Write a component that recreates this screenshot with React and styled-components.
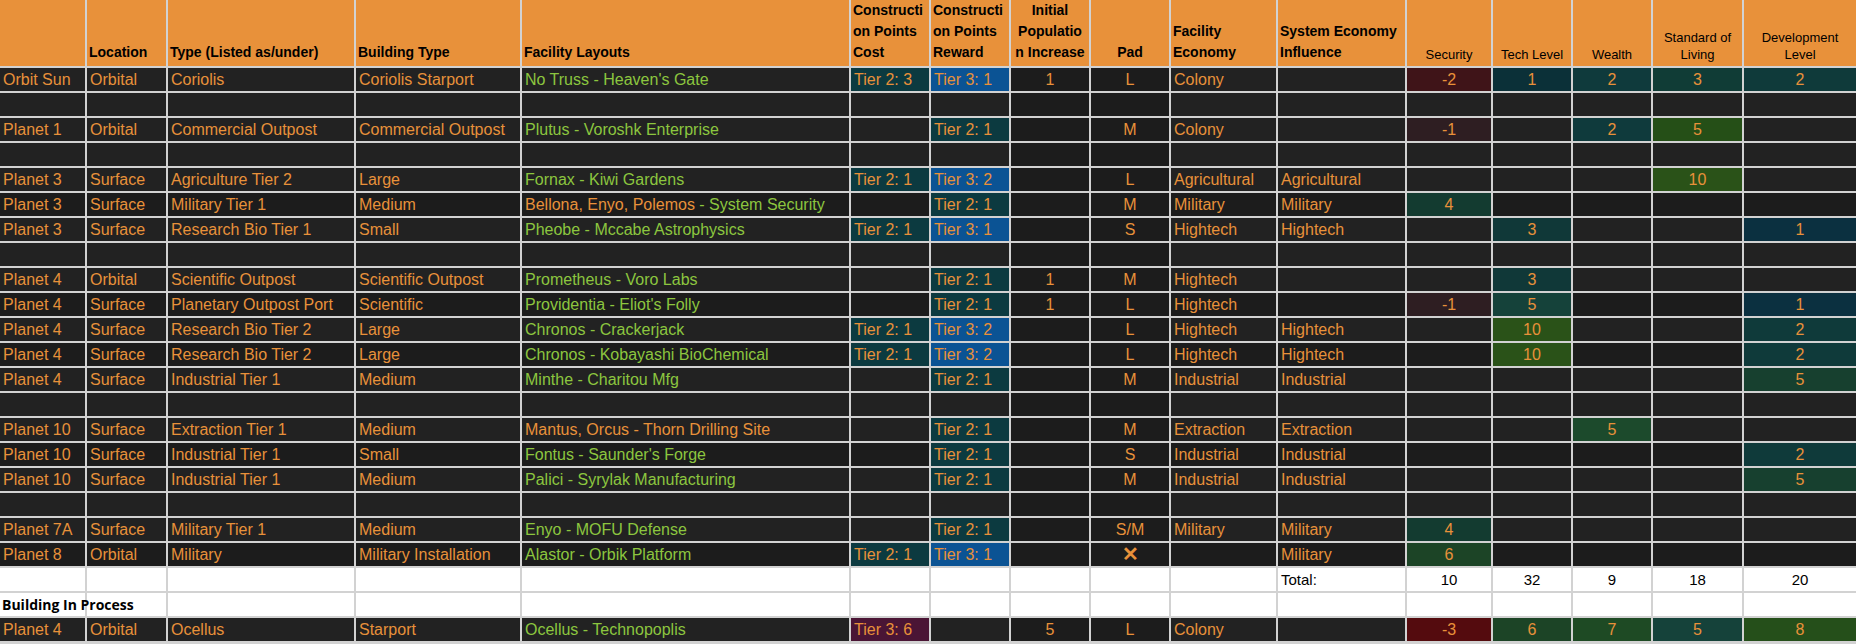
import React from "react";
import styled, { createGlobalStyle } from "styled-components";

const Global = createGlobalStyle`
  html, body { margin: 0; padding: 0; background: #fff; }
  body { font-family: "Liberation Sans", Arial, sans-serif; }
`;

const COLS = "85px 79px 186px 164px 327px 78px 78px 78px 78px 105px 127px 84px 78px 78px 89px 112px";

const Sheet = styled.div`
  display: grid;
  grid-template-columns: ${COLS};
  grid-auto-rows: 23px;
  grid-template-rows: 66px;
  gap: 2px;
  background: #d2d2d2;
  width: 1856px;
  height: 644px;
  overflow: hidden;
`;

const Head = styled.div`
  background: #e8913a;
  color: #000;
  font-weight: ${(p) => (p.$small ? 400 : 700)};
  font-size: ${(p) => (p.$small ? "13px" : "14px")};
  line-height: ${(p) => (p.$small ? "17px" : "21px")};
  display: flex;
  flex-direction: column;
  justify-content: flex-end;
  align-items: ${(p) => (p.$center ? "center" : "flex-start")};
  text-align: ${(p) => (p.$center ? "center" : "left")};
  padding: 0 2px 3px;
  overflow: hidden;
  white-space: pre-line;
`;

const Cell = styled.div`
  background: ${(p) => p.$bg || "#222"};
  color: ${(p) => (p.$green ? "#8cc63f" : "#e8913a")};
  font-size: 16px;
  line-height: 23px;
  padding: 0 3px;
  white-space: nowrap;
  overflow: hidden;
  text-align: ${(p) => (p.$center ? "center" : "left")};
`;

const WhiteCell = styled.div`
  background: #fff;
  color: #000;
  font-size: 15px;
  line-height: 23px;
  padding: 0 3px;
  white-space: nowrap;
  text-align: ${(p) => (p.$center ? "center" : "left")};
  overflow: visible;
  position: relative;
  z-index: ${(p) => (p.$top ? 1 : 0)};
`;

const Section = styled.span`
  font-family: "Open Sans", "Noto Sans", sans-serif;
  font-weight: 700;
  font-size: 14px;
  position: absolute;
  left: 2px;
  top: 0;
`;

const Orange = styled.span`color: #e8913a;`;
const Cross = styled.span`font-size: 20px; font-weight: 700;`;

const T = { teal: "#0c3a40", blue: "#0b5394", purple: "#4a1535" };

const heads = [
  ["", 0, 0], ["Location", 0, 0], ["Type (Listed as/under)", 0, 0], ["Building Type", 0, 0],
  ["Facility Layouts", 0, 0], ["Constructi\non Points\nCost", 0, 0], ["Constructi\non Points\nReward", 0, 0],
  ["Initial\nPopulatio\nn Increase", 1, 0], ["Pad", 1, 0], ["Facility\nEconomy", 0, 0],
  ["System Economy\nInfluence", 0, 0], ["Security", 1, 1], ["Tech Level", 1, 1], ["Wealth", 1, 1],
  ["Standard of\nLiving", 1, 1], ["Development\nLevel", 1, 1],
];

const R = (...a) => a;
const rows = [
  R("Orbit Sun","Orbital","Coriolis","Coriolis Starport","No Truss - Heaven's Gate",["Tier 2: 3",T.teal],["Tier 3: 1",T.blue],"1","L","Colony","",["-2","#3f1418"],["1","#0b3038"],["2","#0f3a3c"],["3","#103c36"],["2","#0f3a3a"]),
  null,
  R("Planet 1","Orbital","Commercial Outpost","Commercial Outpost","Plutus - Voroshk Enterprise","",["Tier 2: 1",T.teal],"","M","Colony","",["-1","#2e1e22"],"",["2","#0f3a3c"],["5","#254f17"],""),
  null,
  R("Planet 3","Surface","Agriculture Tier 2","Large","Fornax - Kiwi Gardens",["Tier 2: 1",T.teal],["Tier 3: 2",T.blue],"","L","Agricultural","Agricultural","","","",["10","#2a5218"],""),
  R("Planet 3","Surface","Military Tier 1","Medium",["Bellona, Enyo, Polemos"," - System Security"],"",["Tier 2: 1",T.teal],"","M","Military","Military",["4","#133b30"],"","","",""),
  R("Planet 3","Surface","Research Bio Tier 1","Small","Pheobe - Mccabe Astrophysics",["Tier 2: 1",T.teal],["Tier 3: 1",T.blue],"","S","Hightech","Hightech","",["3","#103838"],"","",["1","#0b3040"]),
  null,
  R("Planet 4","Orbital","Scientific Outpost","Scientific Outpost","Prometheus - Voro Labs","",["Tier 2: 1",T.teal],"1","M","Hightech","","",["3","#103838"],"","",""),
  R("Planet 4","Surface","Planetary Outpost Port","Scientific","Providentia - Eliot's Folly","",["Tier 2: 1",T.teal],"1","L","Hightech","",["-1","#2e1e22"],["5","#15423a"],"","",["1","#0b3040"]),
  R("Planet 4","Surface","Research Bio Tier 2","Large","Chronos - Crackerjack",["Tier 2: 1",T.teal],["Tier 3: 2",T.blue],"","L","Hightech","Hightech","",["10","#2a5218"],"","",["2","#0f3a3a"]),
  R("Planet 4","Surface","Research Bio Tier 2","Large","Chronos - Kobayashi BioChemical",["Tier 2: 1",T.teal],["Tier 3: 2",T.blue],"","L","Hightech","Hightech","",["10","#2a5218"],"","",["2","#0f3a3a"]),
  R("Planet 4","Surface","Industrial Tier 1","Medium","Minthe - Charitou Mfg","",["Tier 2: 1",T.teal],"","M","Industrial","Industrial","","","","",["5","#17402f"]),
  null,
  R("Planet 10","Surface","Extraction Tier 1","Medium",["Mantus, Orcus - Thorn Drilling Site",""],"",["Tier 2: 1",T.teal],"","M","Extraction","Extraction","","",["5","#1c4a2c"],"",""),
  R("Planet 10","Surface","Industrial Tier 1","Small","Fontus - Saunder's Forge","",["Tier 2: 1",T.teal],"","S","Industrial","Industrial","","","","",["2","#0f3a3a"]),
  R("Planet 10","Surface","Industrial Tier 1","Medium","Palici - Syrylak Manufacturing","",["Tier 2: 1",T.teal],"","M","Industrial","Industrial","","","","",["5","#17402f"]),
  null,
  R("Planet 7A","Surface","Military Tier 1","Medium","Enyo - MOFU Defense","",["Tier 2: 1",T.teal],"","S/M","Military","Military",["4","#133b30"],"","","",""),
  R("Planet 8","Orbital","Military","Military Installation","Alastor - Orbik Platform",["Tier 2: 1",T.teal],["Tier 3: 1",T.blue],"","X","","Military",["6","#1c4426"],"","","",""),
  "total",
  "section",
  R("Planet 4","Orbital","Ocellus","Starport","Ocellus - Technopoplis",["Tier 3: 6",T.purple],"","5","L","Colony","",["-3","#540b0e"],["6","#1c4426"],["7","#1e4a24"],["5","#15423a"],["8","#254f1a"]),
];

const centered = new Set([7, 8, 11, 12, 13, 14, 15]);

function DataRow({ r, idx }) {
  const base = idx % 2 ? "#1c1c1c" : "#222";
  return r.map((v, i) => {
    const key = i;
    const bg0 = i === 7 || i === 8 ? "#1c1c1c" : base;
    if (Array.isArray(v) && i === 4) {
      return (
        <Cell key={key} $bg={bg0} $green>
          <Orange>{v[0]}</Orange>{v[1]}
        </Cell>
      );
    }
    if (Array.isArray(v)) {
      return <Cell key={key} $bg={v[1]} $center={centered.has(i)}>{v[0]}</Cell>;
    }
    if (i === 8 && v === "X") {
      return <Cell key={key} $bg={bg0} $center><Cross>✕</Cross></Cell>;
    }
    return <Cell key={key} $bg={bg0} $green={i === 4} $center={centered.has(i)}>{v}</Cell>;
  });
}

export default function App() {
  return (
    <>
      <Global />
      <Sheet>
        {heads.map(([t, c, s], i) => (
          <Head key={"h" + i} $center={c} $small={s}>{t}</Head>
        ))}
        {rows.map((r, ri) => {
          if (r === null)
            return Array.from({ length: 16 }, (_, i) => <Cell key={ri + "-" + i} $bg={i === 7 || i === 8 ? "#1c1c1c" : "#222"} />);
          if (r === "total")
            return Array.from({ length: 16 }, (_, i) => {
              const vals = { 10: "Total:", 11: "10", 12: "32", 13: "9", 14: "18", 15: "20" };
              return <WhiteCell key={ri + "-" + i} $center={i > 10}>{vals[i] || ""}</WhiteCell>;
            });
          if (r === "section")
            return Array.from({ length: 16 }, (_, i) => (
              <WhiteCell key={ri + "-" + i} $top={i === 0}>{i === 0 ? <Section>Building In Process</Section> : ""}</WhiteCell>
            ));
          return <DataRow key={ri} r={r} idx={ri} />;
        })}
      </Sheet>
    </>
  );
}
